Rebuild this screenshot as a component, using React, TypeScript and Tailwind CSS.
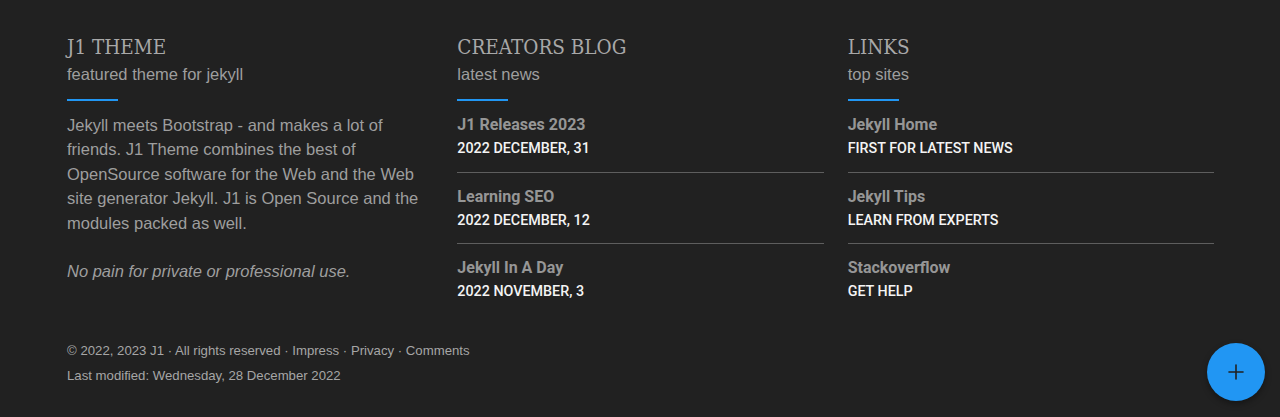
import { Plus } from 'lucide-react';

const blog = [
  { title: "J1 Releases 2023", meta: "2022 December, 31" },
  { title: "Learning SEO", meta: "2022 December, 12" },
  { title: "Jekyll In A Day", meta: "2022 November, 3" },
];

const links = [
  { title: "Jekyll Home", meta: "First for latest news" },
  { title: "Jekyll Tips", meta: "Learn from experts" },
  { title: "Stackoverflow", meta: "Get help" },
];

const Heading = ({ title, subtitle }: { title: string; subtitle: string }) => (
  <div>
    <h2 className="font-['DejaVu_Serif_Condensed','Roboto_Slab','DejaVu_Serif',serif] text-[20.5px] leading-[28px] text-[#a8a8a8] uppercase">
      {title}
    </h2>
    <p className="text-[16.5px] leading-[24px] mt-[1px] text-[#9e9e9e]">{subtitle}</p>
    <div className="w-[51px] h-[2px] bg-[#2196f3] mt-[13px]"></div>
  </div>
);

const ItemList = ({ items }: { items: { title: string; meta: string }[] }) => (
  <ul>
    {items.map((item, index) => (
      <li
        key={index}
        className="pt-[12px] pb-[12.5px] border-b border-[#5e5e5e] last:border-b-0 font-['Roboto',sans-serif]"
      >
        <a href="#" className="block text-[16px] leading-[24px] font-bold text-[#969696]">
          {item.title}
        </a>
        <div className="text-[14.3px] leading-[22px] font-medium uppercase text-[#f4f4f4]">
          {item.meta}
        </div>
      </li>
    ))}
  </ul>
);

const App = () => {
  return (
    <footer className="relative min-h-[417px] bg-[#212121] font-['Liberation_Sans',Arial,sans-serif] text-[#9e9e9e]">
      <div className="w-[1147px] ml-[67px] pt-[33px]">
        <div className="grid grid-cols-3 gap-x-[24px]">
          <div>
            <Heading title="J1 Theme" subtitle="featured theme for jekyll" />
            <div className="pt-[12px] pr-[8px] text-[16.5px] leading-[24.4px]">
              <p>
                Jekyll meets Bootstrap - and makes a lot of friends. J1 Theme combines the best of
                OpenSource software for the Web and the Web site generator Jekyll. J1 is Open Source
                and the modules packed as well.
              </p>
              <p className="mt-[24px] italic">No pain for private or professional use.</p>
            </div>
          </div>
          <div>
            <Heading title="Creators Blog" subtitle="latest news" />
            <ItemList items={blog} />
          </div>
          <div>
            <Heading title="Links" subtitle="top sites" />
            <ItemList items={links} />
          </div>
        </div>

        <div className="mt-[23px] text-[13.2px] leading-[25px] text-[#a6a6a6]">
          <p>
            © 2022, 2023 J1 · All rights reserved · <a href="#">Impress</a> · <a href="#">Privacy</a> ·{" "}
            <a href="#">Comments</a>
          </p>
          <p>Last modified: Wednesday, 28 December 2022</p>
        </div>
      </div>

      <button className="absolute right-[15px] bottom-[16px] w-[58px] h-[58px] rounded-full bg-[#2196f3] flex items-center justify-center shadow-[0_3px_6px_rgba(0,0,0,0.35)]">
        <Plus size={24} strokeWidth={1.6} className="text-[#212121]" />
      </button>
    </footer>
  );
};

export default App;
